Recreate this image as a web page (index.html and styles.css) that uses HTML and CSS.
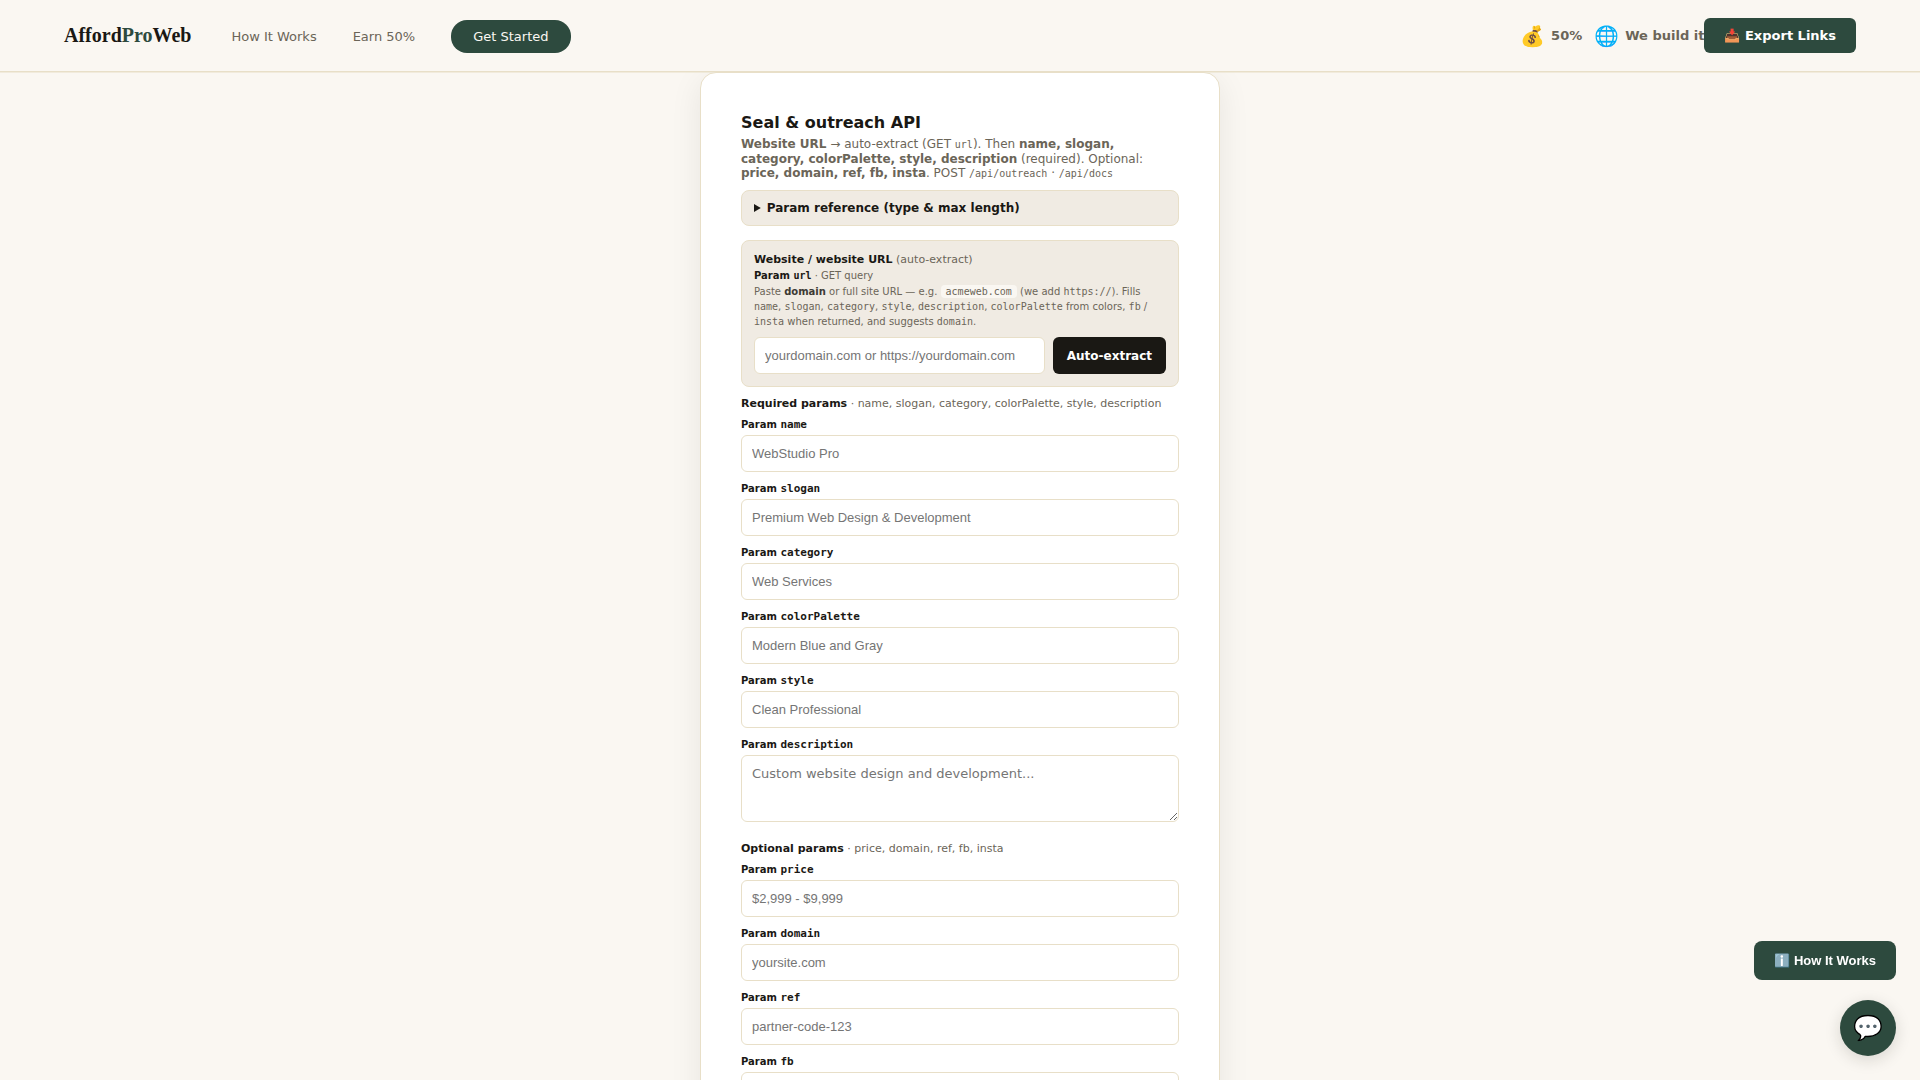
FILE: index.html
```html
<!DOCTYPE html>
<html lang="en">
<head>
    <meta charset="UTF-8">
    <meta name="viewport" content="width=device-width, initial-scale=1.0">
    <title>AffordProWeb</title>
    <link rel="stylesheet" href="styles.css">
</head>
<body>

    <header class="nav">
        <a href="#" class="logo">Afford<span>Pro</span>Web</a>
        <nav class="nav-links">
            <a href="#how">How It Works</a>
            <a href="#earn">Earn 50%</a>
            <a href="#start" class="nav-cta">Get Started</a>
        </nav>
        <div class="ticker">
            <span class="ticker-item"><span class="ticker-icon">💰</span>50%</span>
            <span class="ticker-item"><span class="ticker-icon">🌐</span>We build it</span>
        </div>
        <button type="button" class="export-btn">📥 Export Links</button>
    </header>

    <main class="card">
        <h1>Seal &amp; outreach API</h1>
        <p class="intro"><strong>Website URL</strong> → auto-extract (GET <code>url</code>). Then <strong>name, slogan, category, colorPalette, style, description</strong> (required). Optional: <strong>price, domain, ref, fb, insta</strong>. POST <code>/api/outreach</code> · <code>/api/docs</code></p>

        <details class="reference">
            <summary>Param reference (type &amp; max length)</summary>
            <p>All params are plain text.</p>
        </details>

        <form id="outreach-form">
            <!-- Auto-extract -->
            <div class="extract">
                <label class="extract-title" for="url"><strong>Website / website URL</strong> (auto-extract)</label>
                <div class="extract-param"><strong>Param <code>url</code></strong> · GET query</div>
                <p class="extract-hint">Paste <strong>domain</strong> or full site URL — e.g. <code class="chip">acmeweb.com</code> (we add <code>https://</code>). Fills <code>name</code>, <code>slogan</code>, <code>category</code>, <code>style</code>, <code>description</code>, <code>colorPalette</code> from colors, <code>fb</code> / <code>insta</code> when returned, and suggests <code>domain</code>.</p>
                <div class="extract-row">
                    <input type="text" id="url" placeholder="yourdomain.com or https://yourdomain.com">
                    <button type="button" class="extract-btn">Auto-extract</button>
                </div>
            </div>

            <!-- Required -->
            <div class="group-title"><strong>Required params</strong> · name, slogan, category, colorPalette, style, description</div>
            <div class="field">
                <label for="name">Param <code>name</code></label>
                <input type="text" id="name" placeholder="WebStudio Pro">
            </div>
            <div class="field">
                <label for="slogan">Param <code>slogan</code></label>
                <input type="text" id="slogan" placeholder="Premium Web Design &amp; Development">
            </div>
            <div class="field">
                <label for="category">Param <code>category</code></label>
                <input type="text" id="category" placeholder="Web Services">
            </div>
            <div class="field">
                <label for="colorPalette">Param <code>colorPalette</code></label>
                <input type="text" id="colorPalette" placeholder="Modern Blue and Gray">
            </div>
            <div class="field">
                <label for="style">Param <code>style</code></label>
                <input type="text" id="style" placeholder="Clean Professional">
            </div>
            <div class="field">
                <label for="description">Param <code>description</code></label>
                <textarea id="description" placeholder="Custom website design and development..."></textarea>
            </div>

            <!-- Optional -->
            <div class="group-title optional"><strong>Optional params</strong> · price, domain, ref, fb, insta</div>
            <div class="field">
                <label for="price">Param <code>price</code></label>
                <input type="text" id="price" placeholder="$2,999 - $9,999">
            </div>
            <div class="field">
                <label for="domain">Param <code>domain</code></label>
                <input type="text" id="domain" placeholder="yoursite.com">
            </div>
            <div class="field">
                <label for="ref">Param <code>ref</code></label>
                <input type="text" id="ref" placeholder="partner-code-123">
            </div>
            <div class="field">
                <label for="fb">Param <code>fb</code></label>
                <input type="text" id="fb">
            </div>
            <div class="field">
                <label for="insta">Param <code>insta</code></label>
                <input type="text" id="insta">
            </div>
        </form>
    </main>

    <div class="floating">
        <button type="button" class="help-btn">ℹ️ How It Works</button>
        <button type="button" class="chat-btn" aria-label="Chat">💬</button>
    </div>

</body>
</html>
```
FILE: styles.css
```css
:root {
    --bg: #faf7f2;
    --soft: #f0ebe3;
    --line: #e8dfc8;
    --ink: #1a1814;
    --muted: #6b6558;
    --green: #2d4a3e;
    --sans: "DejaVu Sans", sans-serif;
    --mono: "DejaVu Sans Mono", monospace;
}

* {
    box-sizing: border-box;
    margin: 0;
    padding: 0;
}

body {
    background: var(--bg);
    color: var(--ink);
    font-family: var(--sans);
    font-size: 12px;
}

html {
    scrollbar-width: none;
}

code {
    font-family: var(--mono);
}

/* Header */
.nav {
    position: sticky;
    top: 0;
    z-index: 10;
    display: flex;
    align-items: center;
    height: 72px;
    padding: 0 64px;
    background: var(--bg);
    border-bottom: 1px solid var(--line);
    box-shadow: 0 1px 0 rgba(232, 223, 200, 0.5);
}

.logo {
    font-family: "Liberation Serif", serif;
    font-size: 20px;
    font-weight: bold;
    color: var(--ink);
    text-decoration: none;
}

.logo span {
    color: var(--green);
}

.nav-links {
    display: flex;
    align-items: center;
    gap: 36px;
    margin-left: 40px;
    padding-top: 2px;
}

.nav-links a {
    font-size: 13px;
    line-height: 17px;
    color: var(--muted);
    text-decoration: none;
}

.nav-links .nav-cta {
    padding: 8px 22px;
    border-radius: 16px;
    background: var(--green);
    color: var(--bg);
}

.ticker {
    display: flex;
    align-items: center;
    gap: 12px;
    margin-left: auto;
}

.ticker-item {
    display: flex;
    align-items: center;
    gap: 6px;
    font-size: 13px;
    font-weight: bold;
    color: var(--muted);
    white-space: nowrap;
}

.ticker-icon {
    font-size: 20px;
    font-weight: normal;
}

.export-btn {
    padding: 10px 20px;
    border: none;
    border-radius: 6px;
    background: var(--green);
    color: #fff;
    font: bold 13px/15px var(--sans);
    cursor: pointer;
}

/* Card */
.card {
    max-width: 520px;
    margin: 0 auto;
    padding: 40px;
    border: 1px solid var(--line);
    border-radius: 16px;
    background: #fff;
    box-shadow: 0 8px 32px rgba(26, 24, 20, 0.08);
}

.card h1 {
    font-size: 16px;
    line-height: 19px;
    margin-bottom: 5px;
}

.intro {
    line-height: 14px;
    color: var(--muted);
    margin-bottom: 9px;
}

.intro code {
    font-size: 10px;
}

.reference {
    padding: 10px 12px;
    margin-bottom: 14px;
    border: 1px solid var(--line);
    border-radius: 8px;
    background: var(--soft);
}

.reference summary {
    font-weight: bold;
    line-height: 14px;
    cursor: pointer;
}

.extract {
    padding: 12px;
    margin-bottom: 10px;
    border: 1px solid var(--line);
    border-radius: 8px;
    background: var(--soft);
    color: var(--muted);
}

.extract strong {
    color: var(--ink);
}

.extract-title {
    display: block;
    font-size: 11px;
    line-height: 13px;
    margin-bottom: 2px;
}

.extract-param,
.extract-hint {
    font-size: 10px;
    line-height: 15px;
}

.extract-hint {
    margin-top: 1px;
    margin-bottom: 8px;
}

.extract-hint strong {
    color: #3d3a34;
}

.chip {
    padding: 1px 5px;
    border-radius: 4px;
    background: var(--bg);
}

.extract-row {
    display: flex;
    gap: 8px;
}

.extract-btn {
    padding: 0 14px;
    border: none;
    border-radius: 6px;
    background: var(--ink);
    color: #fff;
    font: bold 12px var(--sans);
    white-space: nowrap;
    cursor: pointer;
}

.group-title {
    font-size: 11px;
    line-height: 13px;
    color: var(--muted);
    margin-bottom: 8px;
}

.group-title strong {
    color: var(--ink);
}

.field {
    margin-bottom: 10px;
}

.field label {
    display: block;
    font-size: 10px;
    font-weight: bold;
    line-height: 13px;
    margin-bottom: 4px;
}

.field code {
    font-size: 11px;
    line-height: 1;
}

input,
textarea {
    display: block;
    width: 100%;
    padding: 10px;
    border: 1px solid var(--line);
    border-radius: 6px;
    background: #fff;
    font: 13px/15px "Liberation Sans", sans-serif;
}

textarea {
    height: 67px;
    font-family: var(--sans);
    resize: vertical;
}

.optional {
    margin-top: 20px;
}

/* Floating buttons */
.floating {
    position: fixed;
    right: 24px;
    bottom: 24px;
    z-index: 20;
    display: flex;
    flex-direction: column;
    align-items: flex-end;
    gap: 20px;
}

.help-btn {
    padding: 12px 20px;
    border: none;
    border-radius: 8px;
    background: var(--green);
    color: #fff;
    font: bold 13px/15px "Liberation Sans", sans-serif;
    cursor: pointer;
}

.chat-btn {
    width: 56px;
    height: 56px;
    border: none;
    border-radius: 50%;
    background: var(--green);
    font-size: 24px;
    box-shadow: 0 4px 16px rgba(26, 24, 20, 0.15);
    cursor: pointer;
}
```
